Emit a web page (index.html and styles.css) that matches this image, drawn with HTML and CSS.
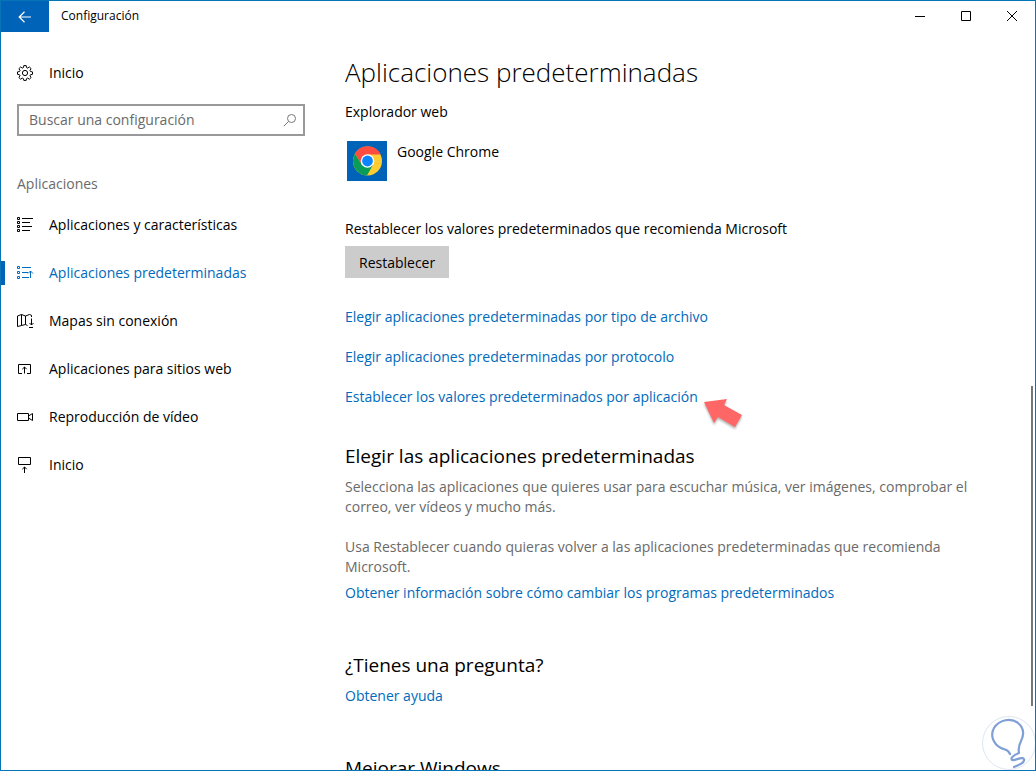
FILE: index.html
```html
<!DOCTYPE html>
<html lang="es">
<head>
  <meta charset="UTF-8">
  <title>Configuración</title>
  <link rel="stylesheet" href="styles.css">
</head>
<body>

<div class="window">
  <header class="titlebar">
    <button class="back" aria-label="Atrás">
      <svg width="14" height="12" viewBox="0 0 14 12" fill="none" stroke="currentColor" stroke-width="1.2"><path d="M13 6H1M6.500 .8L1.200 6l5.300 5.200"/></svg>
    </button>
    <span class="caption">Configuración</span>
    <div class="controls">
      <button aria-label="Minimizar"><svg width="12" height="12"><path d="M1 6.500h10"/></svg></button>
      <button aria-label="Maximizar"><svg width="12" height="12"><path d="M1.500 1.500h9v9h-9z"/></svg></button>
      <button aria-label="Cerrar"><svg width="12" height="12"><path d="M1 1l10 10M11 1L1 11"/></svg></button>
    </div>
  </header>

  <div class="body">
    <aside class="sidebar">
      <a class="home" href="#">
        <svg class="icon" viewBox="0 0 16 16"><path d="M6.800 .6h2.400l.4 2 1.100.5 1.700-1.100 1.700 1.700-1.100 1.700.5 1.100 2 .4v2.400l-2 .4-.5 1.100 1.100 1.700-1.700 1.700-1.700-1.100-1.100.5-.4 1.800H6.800l-.4-1.800-1.100-.5-1.700 1.100-1.700-1.700L3 10.800l-.5-1.100-2-.4V6.900l2-.4L3 5.400 1.900 3.700 3.600 2l1.700 1.100 1.100-.5z"/><circle cx="8" cy="8" r="2.600"/></svg>
        Inicio
      </a>

      <div class="search">
        <input type="text" placeholder="Buscar una configuración" aria-label="Buscar una configuración">
        <svg width="14" height="14" viewBox="0 0 14 14"><circle cx="8.500" cy="5.500" r="4"/><path d="M5.600 8.400L.8 13.200"/></svg>
      </div>

      <h2 class="group">Aplicaciones</h2>
      <nav>
        <a href="#">
          <svg class="icon" viewBox="0 0 16 16"><path d="M.5 .5h2v2h-2zM.5 4.500h2v2h-2zM.5 8.500h2v2h-2zM.5 12.500h2v2h-2zM5 1.500h11M5 5.500h8M5 9.500h10M5 13.500h8"/></svg>
          Aplicaciones y características
        </a>
        <a href="#" class="active">
          <svg class="icon" viewBox="0 0 16 16"><path d="M.5 1.500h2v2h-2zM.5 6.500h2v2h-2zM.5 11.500h2v2h-2zM5 2.500h9M5 7.500h6M5 12.500h7M13.500 13V6M11 8.500L13.500 6 16 8.500"/></svg>
          Aplicaciones predeterminadas
        </a>
        <a href="#">
          <svg class="icon" viewBox="0 0 16 16"><path d="M10.500 12.500L8.500 11.500l-4 1-4 1V3l4-1.500 4 1.500 4-1.500 2 .8V4M4.500 1.500v11M8.500 3v8.500M14.500 5.500V12M12.500 10l2 2 2-2M12 14.500h4"/></svg>
          Mapas sin conexión
        </a>
        <a href="#">
          <svg class="icon" viewBox="0 0 16 16"><path d="M5 12.500H1.500v-9h12v9H10M7.500 12.500V6M5.300 8.200L7.500 6l2.200 2.200"/></svg>
          Aplicaciones para sitios web
        </a>
        <a href="#">
          <svg class="icon" viewBox="0 0 16 16"><path d="M.5 4.500h11v7H.5zM11.500 7l4-2.500v7l-4-2.500"/></svg>
          Reproducción de vídeo
        </a>
        <a href="#">
          <svg class="icon" viewBox="0 0 16 16"><path d="M1.500 .5h12v7h-12zM7.500 16v-6M5.300 12.200L7.500 10l2.200 2.200"/></svg>
          Inicio
        </a>
      </nav>
    </aside>

    <main class="content">
      <h1>Aplicaciones predeterminadas</h1>

      <p class="label">Explorador web</p>
      <div class="app">
        <svg width="40" height="40" viewBox="0 0 40 40">
          <rect width="40" height="40" fill="#0063b8"/>
          <circle cx="20.500" cy="20" r="14.500" fill="#ffcd32"/>
          <path d="M7.900 12.800A14.500 14.500 0 0 1 33.600 13.500L20.500 13.500L14.700 23.300z" fill="#ff4c40"/>
          <path d="M7.900 12.800A14.500 14.500 0 0 0 20 34.500L26.200 23.500L14.700 23.300z" fill="#0a9d58"/>
          <circle cx="20.500" cy="20" r="6.800" fill="#fff"/>
          <circle cx="20.500" cy="20" r="5.400" fill="#0a84ff"/>
        </svg>
        <span>Google Chrome</span>
      </div>

      <p class="reset-text">Restablecer los valores predeterminados que recomienda Microsoft</p>
      <button class="reset">Restablecer</button>

      <ul class="links">
        <li><a href="#">Elegir aplicaciones predeterminadas por tipo de archivo</a></li>
        <li><a href="#">Elegir aplicaciones predeterminadas por protocolo</a></li>
        <li>
          <a href="#">Establecer los valores predeterminados por aplicación</a>
          <svg class="pointer" width="42" height="34" viewBox="0 0 42 34"><path d="M2 4L25 1l-3 6 18 10-7 12-17-10-4 6z"/></svg>
        </li>
      </ul>

      <section class="first">
        <h2>Elegir las aplicaciones predeterminadas</h2>
        <p>Selecciona las aplicaciones que quieres usar para escuchar música, ver imágenes, comprobar el correo, ver vídeos y mucho más.</p>
        <p>Usa Restablecer cuando quieras volver a las aplicaciones predeterminadas que recomienda Microsoft.</p>
        <a href="#">Obtener información sobre cómo cambiar los programas predeterminados</a>
      </section>

      <section>
        <h2>¿Tienes una pregunta?</h2>
        <a href="#">Obtener ayuda</a>
      </section>

      <section>
        <h2>Mejorar Windows</h2>
      </section>
    </main>
  </div>

  <div class="scroll-thumb"></div>
  <svg class="watermark" width="54" height="54" viewBox="0 0 54 54">
    <circle cx="27" cy="27" r="26.500" fill="#fff" stroke="#dde5f3"/>
    <path d="M28 38c-2-5-5-4-9-6C11 28 8 19 12 12 17 4 29 1 36 7c6 5 6 12 3 18-2 4-3 7-2 12-5 2-9 5-7 7 3 1 10-4 12-1 1 4-5 6-10 8" fill="none" stroke="#7f9fd6" stroke-width="2.200" stroke-linecap="round" stroke-linejoin="round"/>
  </svg>
</div>

</body>
</html>
```

FILE: styles.css
```css
* {
  box-sizing: border-box;
}

body {
  margin: 0;
  font-family: "Open Sans", "Noto Sans", sans-serif;
  font-size: 14px;
  line-height: 20px;
  color: #000;
  background: #fff;
}

h1, h2, p, ul {
  margin: 0;
  padding: 0;
  font-weight: 400;
}

button, input {
  font: inherit;
  color: inherit;
  border: none;
  border-radius: 0;
}

a {
  color: #006abc;
  text-decoration: none;
}

svg {
  display: block;
  flex: none;
}

.window {
  position: relative;
  display: flex;
  flex-direction: column;
  height: 100vh;
  border: 1px solid #0675b8;
  overflow: hidden;
}

/* title bar */
.titlebar {
  display: flex;
  flex: none;
  height: 31px;
}

.back {
  display: flex;
  align-items: center;
  justify-content: center;
  width: 48px;
  height: 31px;
  padding: 0;
  background: #0063b8;
  color: #fff;
}

.caption {
  margin-left: 12px;
  font-size: 12px;
  line-height: 30px;
}

.controls {
  display: flex;
  margin-left: auto;
}

.controls button {
  display: flex;
  align-items: center;
  justify-content: center;
  width: 46px;
  height: 30px;
  padding: 0;
  background: none;
}

.controls svg {
  fill: none;
  stroke: #000;
}

/* layout */
.body {
  display: flex;
  flex: 1;
  min-height: 0;
}

.sidebar {
  flex: none;
  width: 320px;
  padding: 31px 16px 0 0;
}

.icon {
  width: 16px;
  height: 16px;
  fill: none;
  stroke: currentColor;
  overflow: visible;
}

.home,
.sidebar nav a {
  display: flex;
  align-items: center;
  gap: 16px;
  padding-left: 16px;
  color: #000;
}

.search {
  display: flex;
  align-items: center;
  height: 32px;
  margin: 21px 0 0 16px;
  padding: 0 6px 0 10px;
  border: 2px solid #999;
}

.search input {
  flex: 1;
  min-width: 0;
  padding: 0;
  background: none;
  outline: none;
}

.search input::placeholder {
  color: #6a6a6a;
  opacity: 1;
}

.search svg {
  fill: none;
  stroke: #777;
}

.group {
  margin: 38px 0 7px 16px;
  font-size: 14px;
  color: #6a6a6a;
}

.sidebar nav a {
  height: 48px;
}

.sidebar nav .active {
  color: #006abc;
  background: linear-gradient(#0063b8, #0063b8) left center / 4px 24px no-repeat;
}

/* content */
.content {
  flex: 1;
  min-width: 0;
  padding: 22px 48px 0 24px;
  overflow: hidden;
}

h1 {
  font-size: 26px;
  line-height: 36px;
  font-weight: 300;
}

.label {
  margin-top: 12px;
}

.app {
  display: flex;
  gap: 10px;
  margin: 19px 0 38px 2px;
}

.app span {
  padding-top: 1px;
}

.reset {
  height: 32px;
  margin-top: 7px;
  padding: 2px 14px 0;
  background: #ccc;
}

.links {
  display: flex;
  flex-direction: column;
  gap: 20px;
  margin-top: 29px;
  list-style: none;
}

.links li {
  position: relative;
  align-self: flex-start;
}

.pointer {
  position: absolute;
  left: 100%;
  top: 11px;
  margin-left: 4px;
  fill: #ff6666;
  filter: drop-shadow(0 2px 1px rgba(0, 0, 0, 0.3));
}

section {
  margin-top: 48px;
}

section.first {
  margin-top: 35px;
}

section h2 {
  margin-bottom: 7px;
  font-size: 19px;
  line-height: 28px;
}

section p {
  color: #6a6a6a;
}

section p + p {
  margin-top: 20px;
}

section a {
  display: block;
}

section p + a {
  margin-top: 6px;
}

/* overlays */
.scroll-thumb {
  position: absolute;
  top: 50%;
  right: 2px;
  width: 2px;
  height: 320px;
  background: #767676;
}

.watermark {
  position: absolute;
  right: -1px;
  bottom: 0;
}
```
